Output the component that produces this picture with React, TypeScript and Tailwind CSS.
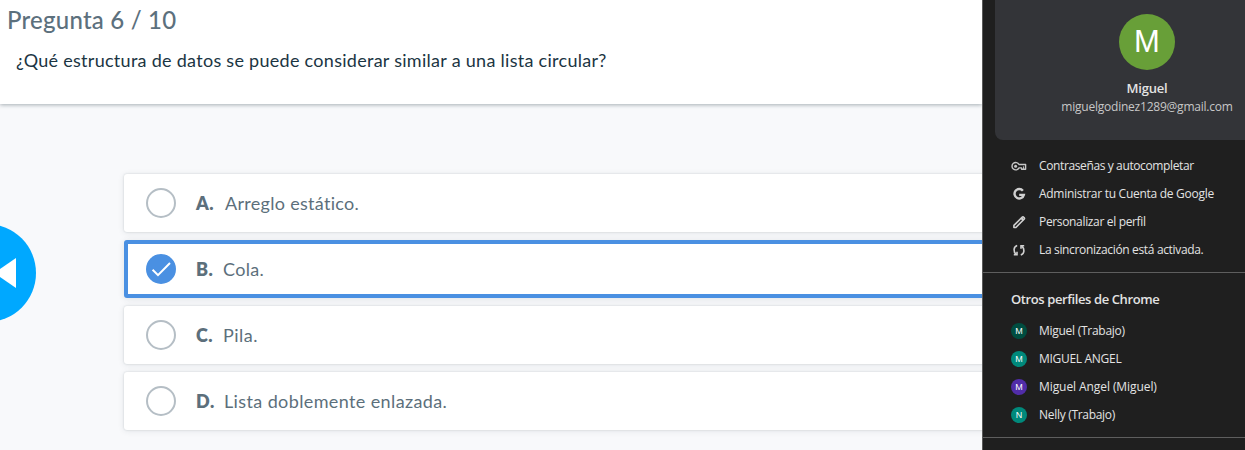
import { ReactNode } from "react";

const options = [
  { letter: "A.", text: "Arreglo estático.", selected: false, gap: "ml-[11px]", spacing: "tracking-[0.3px]" },
  { letter: "B.", text: "Cola.", selected: true, gap: "ml-[9px]", spacing: "tracking-[0.3px]" },
  { letter: "C.", text: "Pila.", selected: false, gap: "ml-[9px]", spacing: "tracking-[0.5px]" },
  { letter: "D.", text: "Lista doblemente enlazada.", selected: false, gap: "ml-[10px]", spacing: "tracking-[0.38px]" },
];

const profiles = [
  { initial: "M", name: "Miguel (Trabajo)", color: "bg-[#004d40]", spacing: "tracking-[-0.27px]" },
  { initial: "M", name: "MIGUEL ANGEL", color: "bg-[#00897b]", spacing: "tracking-[-0.3px]" },
  { initial: "M", name: "Miguel Angel (Miguel)", color: "bg-[#512da8]", spacing: "tracking-[-0.08px]" },
  { initial: "N", name: "Nelly (Trabajo)", color: "bg-[#00897b]", spacing: "tracking-[-0.3px]" },
];

function KeyIcon() {
  return (
    <svg width="16" height="16" viewBox="0 0 16 16" fill="none" stroke="#c8c8c8" strokeWidth="1.4">
      <path d="M8 6.5A3.7 3.7 0 1 0 8 9.9H10.6V11.3H14.6V6.5Z" strokeLinejoin="round" />
      <circle cx="4.6" cy="8.2" r="1.5" fill="#c8c8c8" stroke="none" />
      <path d="M12.6 8.4V11" strokeWidth="1" />
    </svg>
  );
}

function GoogleIcon() {
  return (
    <svg width="16" height="16" viewBox="0 0 16 16" fill="none" stroke="#d0d0d0" strokeWidth="2.4">
      <path d="M11.9 4.8A4.7 4.7 0 1 0 12.8 8.9H8.2" />
    </svg>
  );
}

function PencilIcon() {
  return (
    <svg width="16" height="16" viewBox="0 0 16 16" fill="none" stroke="#d0d0d0" strokeWidth="1.6" strokeLinejoin="round">
      <path d="M2.9 13.5V11.4L11.3 3Q11.8 2.6 12.4 3L13.3 3.9Q13.7 4.5 13.3 5L4.9 13.5Z" />
      <path d="M10.3 4L12.4 6.1" strokeWidth="2.2" />
    </svg>
  );
}

function SyncIcon() {
  return (
    <svg width="16" height="16" viewBox="0 0 16 16" fill="none" stroke="#d0d0d0" strokeWidth="1.6">
      <path d="M6.2 3.6C2.2 4.8 2.2 9.8 5.2 12.3" />
      <path d="M2.8 12.8H6V9.8" />
      <path d="M9.8 12.9C13.8 11.7 13.8 6.7 10.8 4.2" />
      <path d="M13.2 3.7H10V6.7" />
    </svg>
  );
}

const actions: { icon: ReactNode; label: string; spacing: string }[] = [
  { icon: <KeyIcon />, label: "Contraseñas y autocompletar", spacing: "tracking-[-0.38px]" },
  { icon: <GoogleIcon />, label: "Administrar tu Cuenta de Google", spacing: "tracking-[-0.28px]" },
  { icon: <PencilIcon />, label: "Personalizar el perfil", spacing: "tracking-[-0.34px]" },
  { icon: <SyncIcon />, label: "La sincronización está activada.", spacing: "tracking-[-0.34px]" },
];

function Radio({ selected }: { selected: boolean }) {
  if (!selected) {
    return <span className="size-[30px] shrink-0 rounded-full border-2 border-[#b5bec5]" />;
  }
  return (
    <span className="size-[30px] shrink-0 rounded-full bg-[#4a90e2]">
      <svg width="30" height="30" viewBox="0 0 30 30" fill="none" stroke="#fff" strokeWidth="2">
        <path d="M6.6 15.8L12 21.2L24 9" />
      </svg>
    </span>
  );
}

function Quiz() {
  return (
    <main className="relative h-full w-[982px] shrink-0 overflow-hidden bg-[#f8f9fb] font-['Lato',sans-serif]">
      <header className="h-[104px] bg-white shadow-[0_1px_4px_rgba(40,60,70,0.4)]">
        <h1 className="pt-[4px] pl-[7px] text-[24px] leading-[32px] font-medium tracking-[0.22px] whitespace-nowrap text-[#5c707d]">
          Pregunta 6 / 10
        </h1>
        <p className="pt-[12px] pl-[16px] text-[18px] leading-[24px] tracking-[0.28px] whitespace-nowrap text-[#1b3543]">
          ¿Qué estructura de datos se puede considerar similar a una lista circular?
        </p>
      </header>
      <ul className="mt-[70px] ml-[124px] flex w-[900px] flex-col gap-2">
        {options.map((o) => (
          <li
            key={o.letter}
            className={
              o.selected
                ? "flex h-[58px] items-center rounded-[3px] border-4 border-[#4a90e2] bg-white pl-[18px] text-[18px] text-[#5c6f7b] shadow-[0_1px_6px_rgba(40,60,70,0.12)]"
                : "flex h-[58px] items-center rounded-[3px] bg-white pl-[22px] text-[18px] text-[#5c6f7b] shadow-[0_0_2px_rgba(40,60,70,0.2),0_1px_6px_rgba(40,60,70,0.1)]"
            }
          >
            <Radio selected={o.selected} />
            <b className="ml-[20px] w-[18px] font-extrabold tracking-[0.5px] whitespace-nowrap">{o.letter}</b>
            <span className={`${o.gap} ${o.spacing} whitespace-nowrap`}>{o.text}</span>
          </li>
        ))}
      </ul>
      <button aria-label="Anterior" className="absolute top-[224px] left-[-62px] size-[98px] rounded-full bg-[#00a8ff]">
        <svg width="98" height="98" viewBox="0 0 98 98" fill="#fff">
          <path d="M78 34V64L56 49Z" />
        </svg>
      </button>
    </main>
  );
}

function ProfileMenu() {
  return (
    <aside className="h-full w-[263px] shrink-0 overflow-hidden border-l border-[#5a5a5a] bg-[#1f1f1f] font-['Open_Sans',sans-serif] text-[12px] text-[#e3e3e3]">
      <section className="ml-[12px] flex h-[140px] w-[304px] flex-col items-center rounded-b-[8px] bg-[#333438] pt-[14px]">
        <div className="flex size-[56px] items-center justify-center rounded-full bg-[#689f38] pt-[1px] font-['Liberation_Sans',sans-serif] text-[31px] text-white">
          M
        </div>
        <strong className="mt-[9px] text-[13px] leading-[18px] font-semibold tracking-[-0.2px]">Miguel</strong>
        <span className="mt-px text-[12px] leading-[18px] tracking-[-0.22px] text-[#c7c7c7]">miguelgodinez1289@gmail.com</span>
      </section>
      <ul className="mt-[12px] pb-[8px]">
        {actions.map((a) => (
          <li key={a.label} className="flex h-[28px] items-center pl-[28px] whitespace-nowrap">
            {a.icon}
            <span className={`ml-[12px] ${a.spacing}`}>{a.label}</span>
          </li>
        ))}
      </ul>
      <section className="h-[166px] border-y border-[#5e5e5e] pt-[16px]">
        <h2 className="pl-[28px] text-[13px] leading-[20px] font-semibold tracking-[-0.4px] whitespace-nowrap">
          Otros perfiles de Chrome
        </h2>
        <ul className="mt-[8px]">
          {profiles.map((p) => (
            <li key={p.name} className="flex h-[28px] items-center pl-[28px] whitespace-nowrap">
              <span
                className={`flex size-[16px] items-center justify-center rounded-full pt-px font-['Liberation_Sans',sans-serif] text-[9px] leading-none text-white ${p.color}`}
              >
                {p.initial}
              </span>
              <span className={`ml-[12px] ${p.spacing}`}>{p.name}</span>
            </li>
          ))}
        </ul>
      </section>
    </aside>
  );
}

export default function App() {
  return (
    <div className="flex h-[450px] w-[1245px] overflow-hidden">
      <Quiz />
      <ProfileMenu />
    </div>
  );
}
